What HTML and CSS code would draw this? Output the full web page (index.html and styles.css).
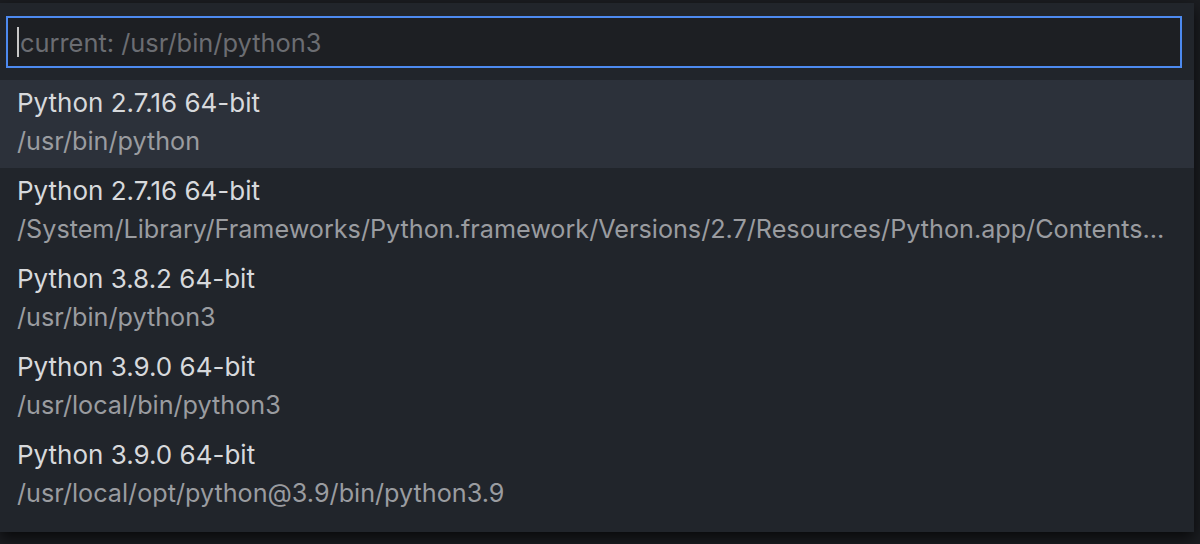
FILE: index.html
```html
<!DOCTYPE html>
<html lang="en">
<head>
  <meta charset="UTF-8" />
  <title>Select Interpreter</title>
  <link rel="stylesheet" href="styles.css">
</head>
<body>
  <div class="quick-pick">
    <div class="input-box">
      <span class="caret"></span>
      <span class="placeholder">current: /usr/bin/python3</span>
    </div>
    <div class="list">
      <div class="item selected">
        <div class="label">Python 2.7.16 64-bit</div>
        <div class="detail">/usr/bin/python</div>
      </div>
      <div class="item">
        <div class="label">Python 2.7.16 64-bit</div>
        <div class="detail">/System/Library/Frameworks/Python.framework/Versions/2.7/Resources/Python.app/Contents…</div>
      </div>
      <div class="item">
        <div class="label">Python 3.8.2 64-bit</div>
        <div class="detail">/usr/bin/python3</div>
      </div>
      <div class="item">
        <div class="label">Python 3.9.0 64-bit</div>
        <div class="detail">/usr/local/bin/python3</div>
      </div>
      <div class="item">
        <div class="label">Python 3.9.0 64-bit</div>
        <div class="detail">/usr/local/opt/python@3.9/bin/python3.9</div>
      </div>
    </div>
  </div>
</body>
</html>
```

FILE: styles.css
```css
html, body {
  margin: 0;
  padding: 0;
  height: 100%;
  background: #1b1d21;
  font-family: Inter, 'Noto Sans', sans-serif;
  overflow: hidden;
}

.quick-pick {
  width: 1194px;
  margin-top: 3px;
  padding: 13px 0 12px;
  background: #21252b;
  box-shadow: 0 6px 14px rgba(0, 0, 0, 0.7);
  box-sizing: border-box;
}

.input-box {
  display: flex;
  align-items: center;
  height: 52px;
  margin: 0 12px 12px 6px;
  padding-left: 9px;
  background: #1d1f23;
  border: 2px solid #4d8af0;
  box-sizing: border-box;
}

.caret {
  width: 2px;
  height: 30px;
  background: #c8c8c8;
}

.placeholder {
  font-size: 25.4px;
  color: #6b6d72;
  margin-left: 1px;
}

.item {
  padding: 4px 8px 8px 17px;
}

.item.selected {
  background: #2c313a;
}

.label, .detail {
  line-height: 38px;
  white-space: nowrap;
  overflow: hidden;
}

.label {
  font-size: 26px;
  color: #d7d9dc;
}

.detail {
  font-size: 25.2px;
  color: #9a9ca0;
}
```
